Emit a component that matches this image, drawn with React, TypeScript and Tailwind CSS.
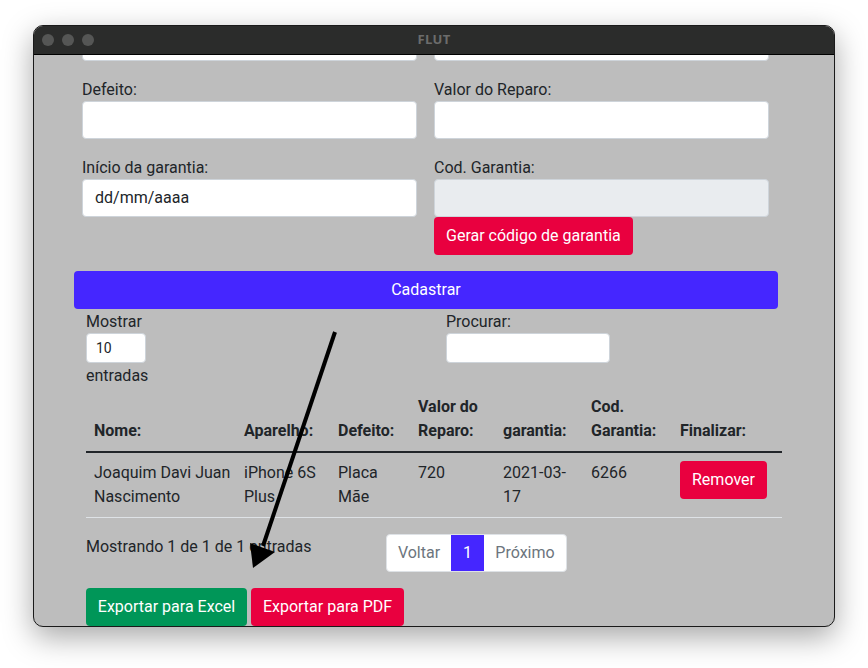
import React from "react";

const inputCls =
  "block w-full h-[38px] bg-white border border-[#ced4da] rounded-[4px]";

function Field({ label, children }: { label: string; children: React.ReactNode }) {
  return (
    <div className="flex flex-col">
      <label className="leading-6 text-[16px] text-[#212529] pt-[1px] -mb-[1px]">{label}</label>
      {children}
    </div>
  );
}

export default function App() {
  const th = "px-2 py-2 align-bottom text-left font-bold leading-6 text-[#212529]";
  const td = "px-2 py-2 align-top text-left leading-6 text-[#212529]";
  return (
    <div className="relative w-[868px] h-[668px] bg-white pl-[33px] pt-[25px] font-['Roboto',sans-serif] overflow-hidden">
      <div className="w-[802px] h-[602px] rounded-[10px] overflow-hidden border border-[#1a1a1a] shadow-[0_10px_30px_rgba(0,0,0,0.35)] flex flex-col bg-[#bdbdbd]">
        {/* title bar */}
        <div className="h-[29px] shrink-0 bg-[#2b2c2b] border-b border-black grid grid-cols-[1fr_auto_1fr] items-center">
          <div className="flex items-center gap-2 pl-[8px]">
            <span className="w-3 h-3 rounded-full bg-[#555655]" />
            <span className="w-3 h-3 rounded-full bg-[#555655]" />
            <span className="w-3 h-3 rounded-full bg-[#555655]" />
          </div>
          <div className="text-[13px] font-bold text-[#6c6c6c] tracking-[0.3px] font-['Open_Sans',sans-serif]">FLUT</div>
          <div />
        </div>
        {/* content */}
        <div className="flex-1 overflow-hidden">
          <div className="ml-[40px] w-[704px] -mt-[32px]">
            <div className="grid grid-cols-2 gap-x-[17px] pl-2 pr-[9px]">
              <div className="mb-4"><div className={inputCls} /></div>
              <div className="mb-4"><div className={inputCls} /></div>
              <div className="mb-4">
                <Field label="Defeito:"><div className={inputCls} /></Field>
              </div>
              <div className="mb-4">
                <Field label="Valor do Reparo:"><div className={inputCls} /></Field>
              </div>
              <div className="mb-4">
                <Field label="Início da garantia:">
                  <div className={inputCls + " flex items-center pl-3 text-[16px] text-[#212529]"}>dd/mm/aaaa</div>
                </Field>
              </div>
              <div className="mb-4">
                <Field label="Cod. Garantia:">
                  <div className="block w-full h-[38px] bg-[#e9ecef] border border-[#ced4da] rounded-[4px]" />
                  <div>
                    <button className="h-[38px] px-3 rounded-[4px] bg-[#e9003f] text-white text-[16px]">
                      Gerar código de garantia
                    </button>
                  </div>
                </Field>
              </div>
            </div>
            <button className="w-full h-[38px] rounded-[4px] bg-[#4526ff] text-white text-[16px]">Cadastrar</button>

            <div className="px-3">
              <div className="flex">
                <div className="w-[360px] flex flex-col">
                  <span className="leading-6 text-[16px] text-[#212529] pt-[1px] -mb-[1px]">Mostrar</span>
                  <div className="w-[60px] h-[30px] bg-white border border-[#ced4da] rounded-[4px] flex items-center pl-[9px] text-[14px] text-[#212529]">10</div>
                  <span className="leading-6 text-[16px] text-[#212529] pt-[1px] -mb-[1px]">entradas</span>
                </div>
                <div className="flex flex-col">
                  <span className="leading-6 text-[16px] text-[#212529] pt-[1px] -mb-[1px]">Procurar:</span>
                  <div className="w-[164px] h-[30px] bg-white border border-[#ced4da] rounded-[4px]" />
                </div>
              </div>

              <table className="w-[696px] table-fixed border-collapse text-[16px] mb-4">
                <colgroup>
                  <col className="w-[150px]" />
                  <col className="w-[94px]" />
                  <col className="w-[80px]" />
                  <col className="w-[85px]" />
                  <col className="w-[88px]" />
                  <col className="w-[89px]" />
                  <col className="w-[110px]" />
                </colgroup>
                <thead>
                  <tr className="border-b-2 border-[#212529]">
                    <th className={th}>Nome:</th>
                    <th className={th}>Aparelho:</th>
                    <th className={th}>Defeito:</th>
                    <th className={th}>Valor do Reparo:</th>
                    <th className={th}>garantia:</th>
                    <th className={th}>Cod. Garantia:</th>
                    <th className={th}>Finalizar:</th>
                  </tr>
                </thead>
                <tbody>
                  <tr className="border-b border-[#dee2e6]">
                    <td className={td + " pr-0"}>Joaquim Davi Juan Nascimento</td>
                    <td className={td}>iPhone 6S Plus</td>
                    <td className={td}>Placa Mãe</td>
                    <td className={td}>720</td>
                    <td className={td}>2021-03-17</td>
                    <td className={td}>6266</td>
                    <td className={td}>
                      <button className="h-[38px] px-3 rounded-[4px] bg-[#e9003f] text-white text-[16px] leading-6">Remover</button>
                    </td>
                  </tr>
                </tbody>
              </table>

              <div className="flex">
                <div className="w-[300px] leading-6 text-[16px] text-[#212529] pt-[1px]">Mostrando 1 de 1 de 1 entradas</div>
                <div className="flex h-[38px] rounded-[4px] border border-[#dee2e6] bg-white overflow-hidden text-[16px]">
                  <span className="w-[64px] flex items-center justify-center text-[#6c757d]">Voltar</span>
                  <span className="w-[33px] flex items-center justify-center bg-[#4526ff] text-white">1</span>
                  <span className="w-[82px] flex items-center justify-center text-[#6c757d]">Próximo</span>
                </div>
              </div>

              <div className="flex gap-1 mt-4">
                <button className="h-[38px] w-[161px] rounded-[4px] bg-[#009658] text-white text-[16px]">Exportar para Excel</button>
                <button className="h-[38px] w-[153px] rounded-[4px] bg-[#e9003f] text-white text-[16px]">Exportar para PDF</button>
              </div>
            </div>
          </div>
        </div>
      </div>

      {/* annotation arrow */}
      <svg className="absolute left-0 top-0 pointer-events-none" width="868" height="668" viewBox="0 0 868 668">
        <line x1="335" y1="332" x2="263" y2="546" stroke="#000" strokeWidth="4" />
        <polygon points="253,568 250,543 275,552" fill="#000" />
      </svg>
    </div>
  );
}
